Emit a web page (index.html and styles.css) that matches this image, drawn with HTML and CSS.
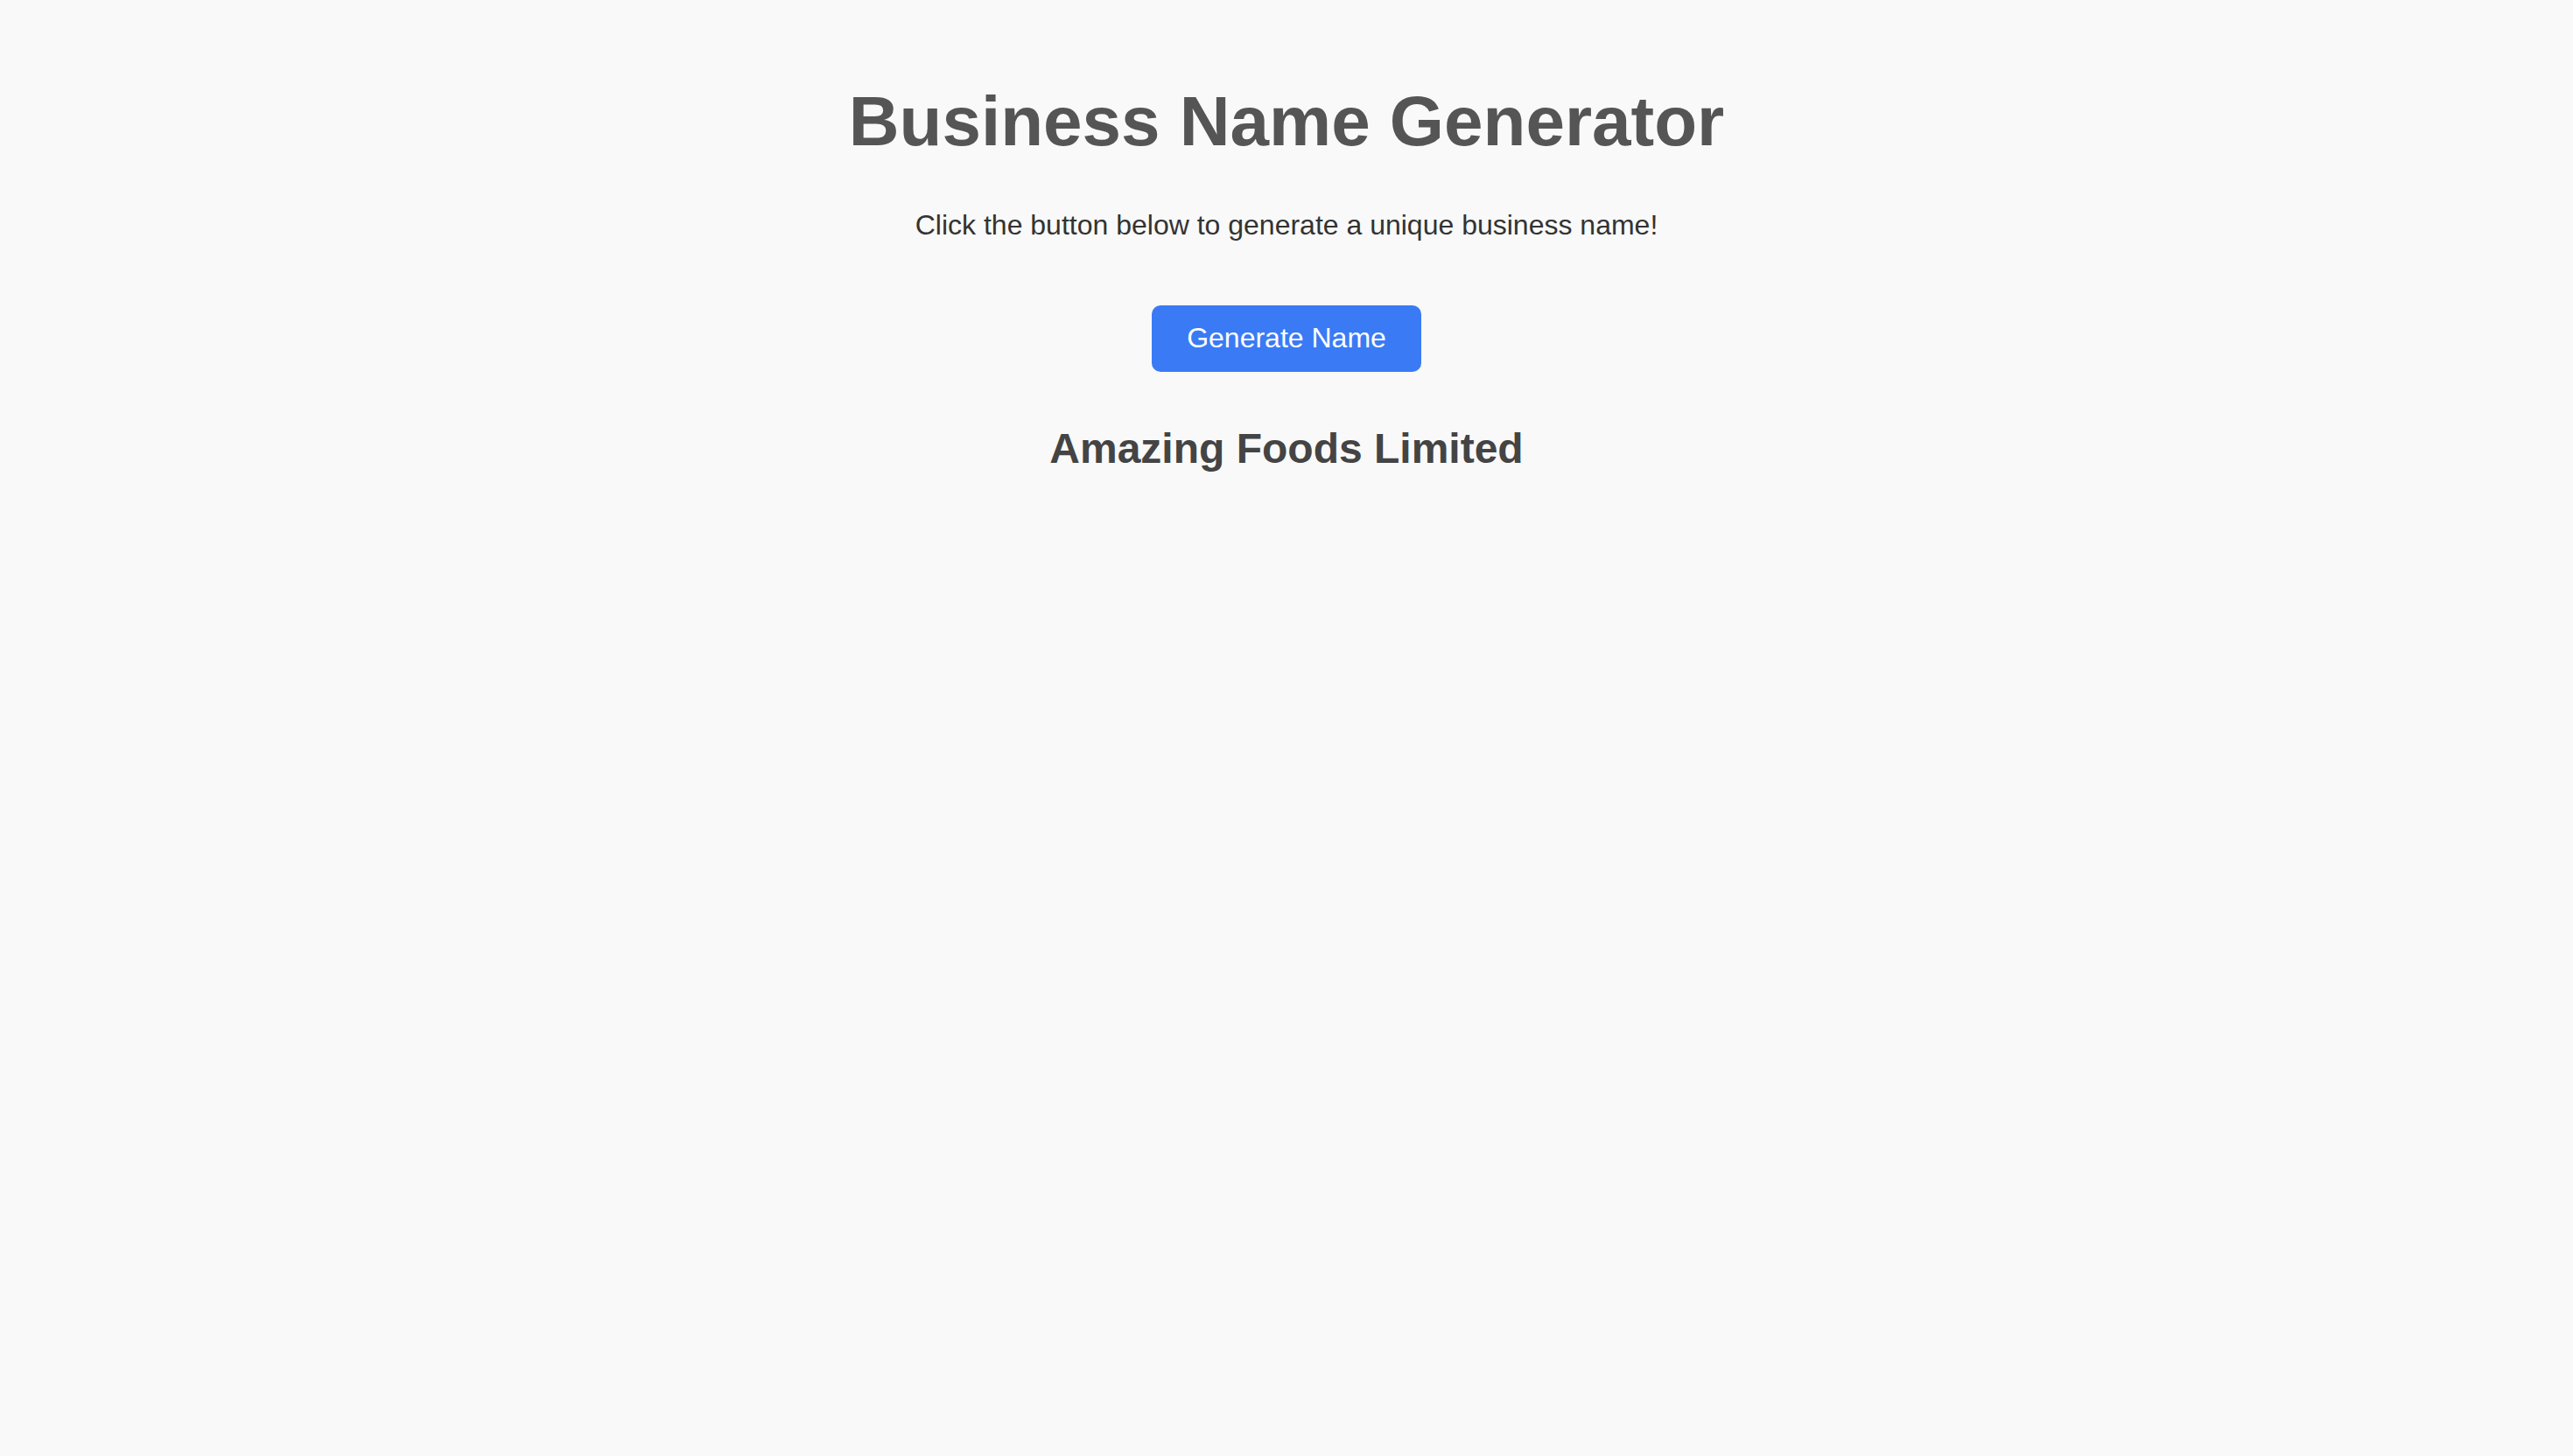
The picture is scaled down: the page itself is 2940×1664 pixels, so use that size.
FILE: index.html
```html
<!DOCTYPE html>
<html lang="en">
<head>
<meta charset="utf-8">
<title>Business Name Generator</title>
<link rel="stylesheet" href="styles.css">
</head>
<body>
  <main class="app">
    <h1 class="title">Business Name Generator</h1>
    <p class="intro">Click the button below to generate a unique business name!</p>
    <button class="generate-btn" type="button">Generate Name</button>
    <h2 class="result">Amazing Foods Limited</h2>
  </main>
</body>
</html>
```

FILE: styles.css
```css
html {
  background: #f9f9f9;
}

html, body {
  margin: 0;
  padding: 0;
}

body {
  font-family: "Liberation Sans", Arial, sans-serif;
}

.app {
  display: flex;
  flex-direction: column;
  align-items: center;
  text-align: center;
  padding-top: 93px;
}

.title {
  margin: 0;
  font-size: 80px;
  line-height: 92px;
  font-weight: 700;
  color: #555555;
}

.intro {
  margin: 54px 0 0;
  font-size: 32px;
  line-height: 37px;
  color: #333333;
}

.generate-btn {
  margin-top: 73px;
  padding: 19px 40px 21px;
  font-family: "Liberation Sans", Arial, sans-serif;
  font-size: 32px;
  line-height: 36px;
  color: #ffffff;
  background: #3a7bf5;
  border: none;
  border-radius: 10px;
  cursor: pointer;
}

.result {
  margin: 60px 0 0;
  font-size: 48px;
  line-height: 55px;
  font-weight: 700;
  color: #444444;
}
```
